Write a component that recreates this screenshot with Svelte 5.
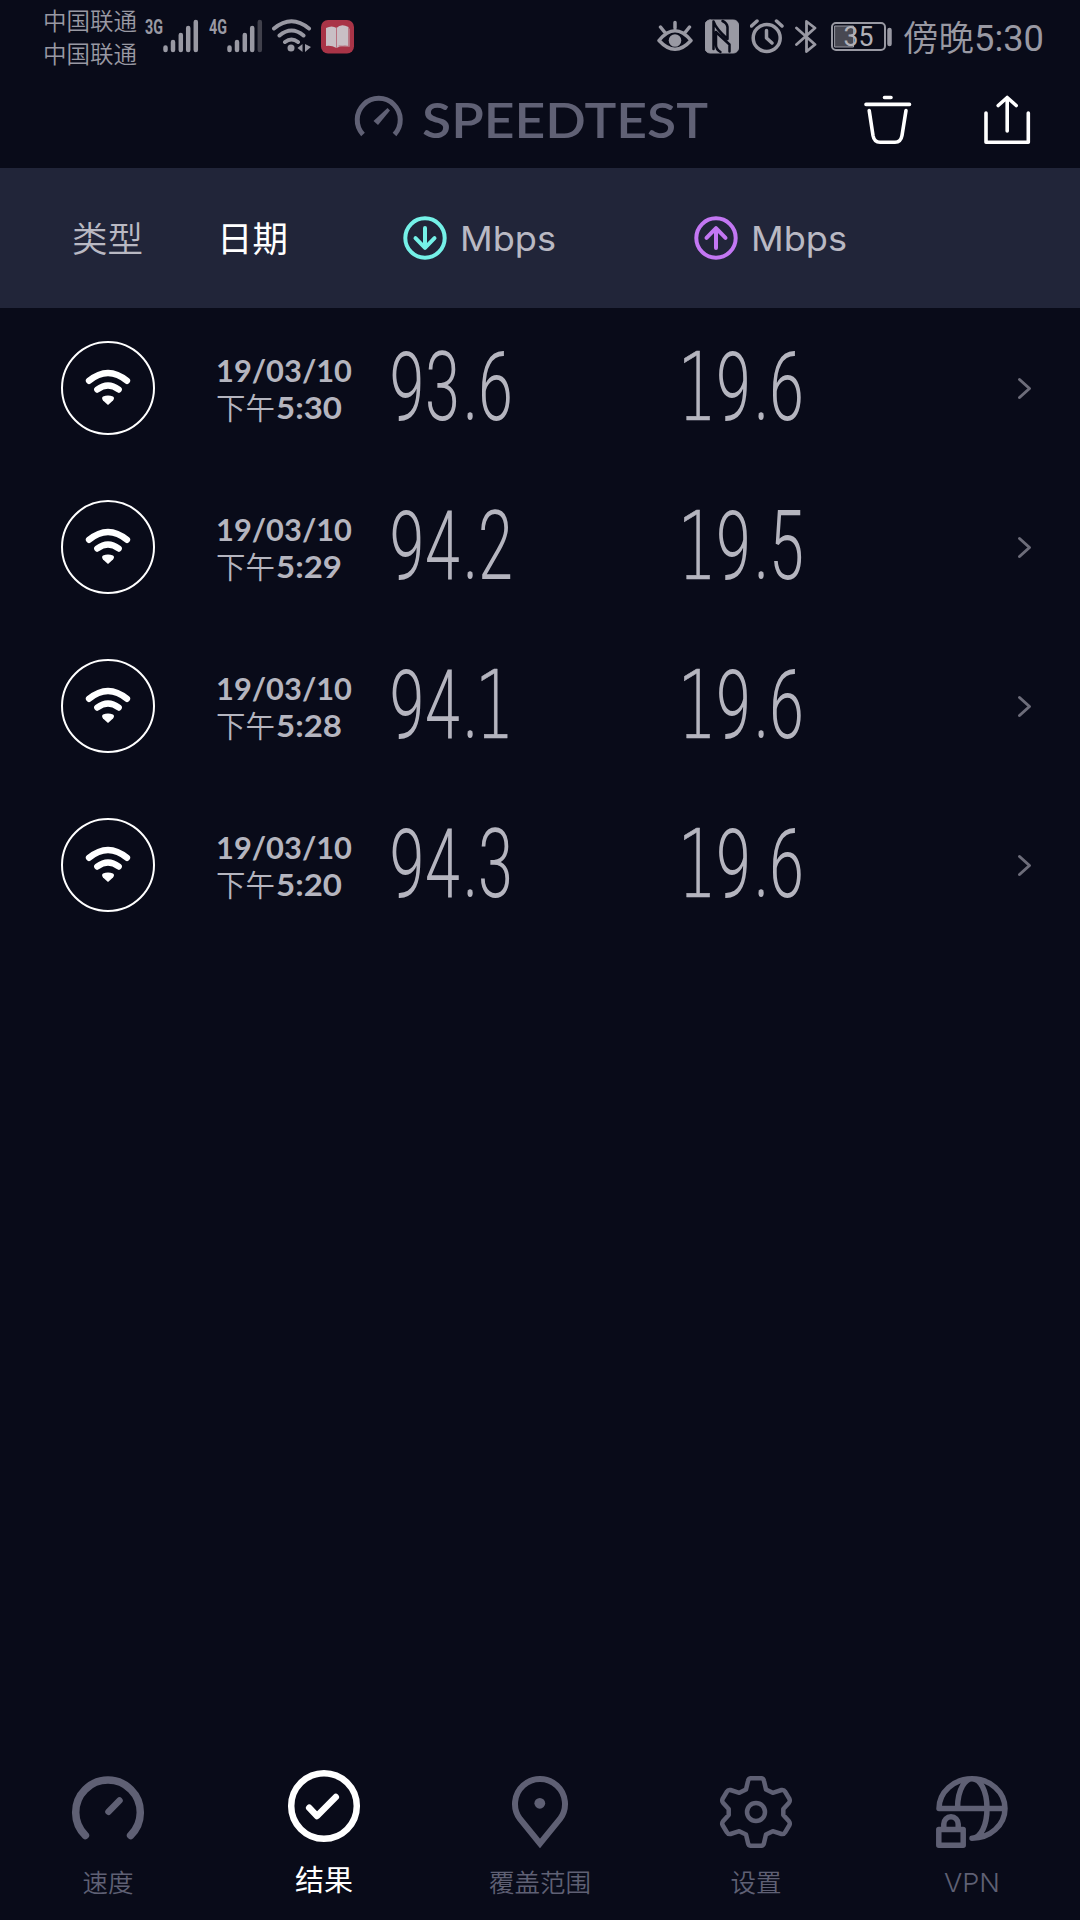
<script lang="ts">
  const results = [
    { date: '19/03/10', time: '5:30', down: '93.6', up: '19.6' },
    { date: '19/03/10', time: '5:29', down: '94.2', up: '19.5' },
    { date: '19/03/10', time: '5:28', down: '94.1', up: '19.6' },
    { date: '19/03/10', time: '5:20', down: '94.3', up: '19.6' },
  ];
  const tabs = [
    { id: 'speed', label: '速度' },
    { id: 'results', label: '结果' },
    { id: 'map', label: '覆盖范围' },
    { id: 'settings', label: '设置' },
    { id: 'vpn', label: 'VPN' },
  ];
  const active = 'results';

  // Start of each character cell in a reading such as "93.6"
  const slots = [0.5, 36, 74, 89];
  const condense = 0.655;
</script>

{#snippet bars(dim: boolean)}
  <svg class="bars" width="36" height="36" viewBox="0 0 36 36">
    <path d="M2.5 29.5V32M10 24V32M17.8 17V32M25.2 10V32" />
    <path class:dim d="M32.8 4V32" />
  </svg>
{/snippet}

<!-- Text stretched to an exact advance width -->
{#snippet fit(text: string, width: number, height: number, baseline: number, cls: string)}
  <svg class="fit {cls}" {width} {height}>
    <text x="0" y={baseline} textLength={width} lengthAdjust="spacingAndGlyphs">{text}</text>
  </svg>
{/snippet}

<!-- Condensed speed reading; the digit 1 uses a face with a foot serif -->
{#snippet reading(value: string)}
  <svg class="fit num" width="124" height="90">
    <text transform="scale({condense} 1)" y="77">{#each value.split('') as c, i}<tspan class:one={c === '1'} x={(slots[i] - (c === '1' ? 3 : 0)) / condense}>{c}</tspan>{/each}</text>
  </svg>
{/snippet}

<div class="screen">
  <div class="status">
    <div class="carriers"><span>中国联通</span><span>中国联通</span></div>
    <div class="net">{@render fit('3G', 18, 36, 16, 'gen')}{@render bars(false)}</div>
    <div class="net second">{@render fit('4G', 18, 36, 16, 'gen')}{@render bars(true)}</div>
    <svg class="wifi" width="42" height="36" viewBox="0 0 42 36">
      <path d="M3 10.500Q20.500-4 38 10.500M8.500 17.500Q20.500 7.500 32.500 17.500M14 24Q20.500 19 27 24" />
      <circle cx="20" cy="30" r="3.500" />
      <path class="solid" d="M31.500 26v8l-5-4zM34 26v8l6-5z" />
    </svg>
    <svg class="book" width="33" height="34" viewBox="0 0 33 34">
      <rect width="33" height="33.500" rx="7" fill="#a93447" />
      <path d="M5 8Q11 5 15.500 8Q20 3 27.500 7V26Q20 25 15.500 28Q10 25 5 26z" fill="#c9bfc5" />
      <path d="M15.500 8V27.500M18 26L28.500 26.500V9" stroke="#b9707f" fill="none" />
    </svg>
    <div class="sys">
      <svg class="eye" width="36" height="36" viewBox="0 0 36 36">
        <path d="M2 22.500Q18 3 34 22.500Q18 40 2 22.500zM18 10V4.500M7.500 14L3.500 9M28.500 14L32.500 9" />
        <circle cx="18" cy="22.500" r="6.300" />
      </svg>
      <svg class="nfc" width="34" height="36" viewBox="0 0 34 36">
        <rect y="2" width="33.500" height="33" rx="5" fill="#9999a3" />
        <path d="M8.500 3.500V31M8.500 3.500Q11 11 22.500 21V9Q22 5 17.500 3M11 14V27Q11 31.500 15.500 34M11 14L24.500 26.500V33.500" />
      </svg>
      <svg class="alarm" width="34" height="36" viewBox="0 0 34 36">
        <circle cx="16.700" cy="20" r="13.500" />
        <path d="M16.500 12.500V20L22 25M1.500 8L7 3M26.500 3L32 8" />
      </svg>
      <svg class="bt" width="22" height="36" viewBox="0 0 22 36">
        <path d="M1.500 10L20 26.500L11.500 33.500V3.500L20 10L1.500 26.500" />
      </svg>
      <svg class="battery" width="62" height="36" viewBox="0 0 62 36">
        <rect class="case" x="1" y="5" width="53" height="27" rx="4" />
        <rect x="4" y="8" width="18.500" height="21" fill="#484852" />
        <path d="M58.500 12V26" />
        <text x="12.500" y="27.500" textLength="30" lengthAdjust="spacingAndGlyphs">35</text>
      </svg>
      <div class="clock"><span>傍晚</span>{@render fit('5:30', 70, 40, 32.5, 'clocknum')}</div>
    </div>
  </div>

  <header>
    <div class="brand">
      <svg class="logo" width="50" height="44" viewBox="0 0 50 44">
        <path d="M9 39.500A21.500 21.500 0 1 1 40.500 39.500" />
        <path class="needle" d="M19.500 26L33.500 13L36 15.500L24 30z" />
      </svg>
      {@render fit('SPEEDTEST', 286, 50, 42.5, 'word')}
    </div>
    <svg class="act" width="52" height="54" viewBox="0 0 52 54">
      <path d="M22.500 5.500H29M4 12.400H47.500M7.200 18.500L11 43.500Q12.200 50.300 18 50.300H33Q38.800 50.300 40 43.500L44 18.500" />
    </svg>
    <svg class="act share" width="52" height="54" viewBox="0 0 52 54">
      <path d="M5 21V50.300H47.300V21M26.200 39V6M17.200 13.500L26.200 5.500L35.200 13.500" />
    </svg>
  </header>

  <div class="cols">
    <span class="type">类型</span>
    <span class="day">日期</span>
    <div class="unit down">
      <svg width="44" height="44" viewBox="0 0 44 44"><circle cx="22" cy="22" r="19.700" /><path d="M22 12V31.500M12.500 22.200L22 31.800L31.500 22.200" /></svg>
      {@render fit('Mbps', 96, 44, 34.5, 'mbps')}
    </div>
    <div class="unit up">
      <svg width="44" height="44" viewBox="0 0 44 44"><circle cx="22" cy="22" r="19.700" /><path d="M22 32V12.500M12.500 21.800L22 12.200L31.500 21.800" /></svg>
      {@render fit('Mbps', 96, 44, 34.5, 'mbps')}
    </div>
  </div>

  <main>
    {#each results as r}
      <div class="row">
        <svg class="kind" width="96" height="96" viewBox="0 0 96 96">
          <circle cx="48" cy="48" r="46" />
          <path d="M29 40.800Q48 25.200 67 40.800M37.300 49.600Q48 41.500 58.700 49.600" />
          <path class="tip" d="M43 56.500Q48 54.500 53 56.500Q55 58 53 60.500L48 65L43 60.500Q41.200 58 43 56.500z" />
        </svg>
        <div class="when">
          {@render fit(r.date, 136, 36, 30, 'date')}
          <div class="time"><span>下午</span>{@render fit(r.time, 66, 36, 30.5, 'date')}</div>
        </div>
        {@render reading(r.down)}
        {@render reading(r.up)}
        <svg class="chev" width="16" height="24" viewBox="0 0 16 24"><path d="M2.500 3.500L12.500 12.500L2.500 21.500" /></svg>
      </div>
    {/each}
  </main>

  <nav>
    {#each tabs as t}
      <div class="tab" class:active={t.id === active}>
        <svg width="80" height="84" viewBox="0 0 80 84">
          {#if t.id === 'speed'}
            <path stroke-width="7.500" d="M17.400 67.500A32.300 32.300 0 1 1 62.600 67.500" />
            <path stroke-width="6.500" d="M40.500 43.700L51.500 32.500" />
          {:else if t.id === 'results'}
            <circle cx="40" cy="38" r="32.800" stroke-width="6.500" />
            <path stroke-width="6.500" d="M25.200 39.800L33 48L51.800 29" />
          {:else if t.id === 'map'}
            <path stroke-width="6" stroke-linejoin="miter" d="M40 75.500L20 51A25 25 0 1 1 60 51z" />
            <circle class="dot" cx="39.800" cy="35.300" r="5.400" />
          {:else if t.id === 'settings'}
            <path
              stroke-width="4.500"
              d="M34.500 10.200H45.500Q47.500 10.500 48 13L50 21.500L56.700 24.800L65.500 22Q68 21.600 69 23.500L73.500 31Q74.300 33 73 34.700L67.300 41V47L73 53.300Q74.300 55 73.500 57L69 64.500Q68 66.400 65.500 66L56.700 63.200L50 66.500L48 75Q47.500 77.500 45.500 77.800H34.500Q32.500 77.500 32 75L30 66.500L23.300 63.200L14.500 66Q12 66.400 11 64.500L6.500 57Q5.700 55 7 53.300L12.700 47V41L7 34.700Q5.700 33 6.500 31L11 23.500Q12 21.600 14.500 22L23.300 24.800L30 21.500L32 13Q32.500 10.500 34.500 10.200z"
            />
            <circle cx="40" cy="44" r="9" stroke-width="4.500" />
          {:else}
            <path stroke-width="5.500" d="M7 40.500A33 29.700 0 1 1 40 70.200M7 40.500H73M25.500 40.500C25.500 20 34 10.800 40 10.800C48 10.800 55 22 55 40.500C55 57 49 70.200 40 70.200" />
            <path stroke-width="5.500" stroke-linejoin="round" d="M6.800 61.500H31.200V77.200H6.800zM11.800 61V56A7.200 7.200 0 0 1 26.200 56V61" />
          {/if}
        </svg>
        {#if t.id === 'vpn'}
          {@render fit(t.label, 56, 38, 28, 'vpn')}
        {:else}
          <span>{t.label}</span>
        {/if}
      </div>
    {/each}
  </nav>
</div>

<style>
  :global(body) { background: #090b19; }
  .screen {
    width: 1080px;
    height: 1920px;
    display: flex;
    flex-direction: column;
    background: #090b19;
    color: #b9b9c3;
    font-family: Inter, "Noto Sans CJK SC", sans-serif;
    overflow: hidden;
  }
  svg { display: block; flex: none; fill: none; stroke-linecap: round; stroke-linejoin: round; }
  .fit { overflow: visible; }
  .fit text { fill: currentColor; stroke: none; }

  .status { height: 75px; box-sizing: border-box; padding: 0 36px 0 43px; display: flex; align-items: flex-start; color: #9999a3; stroke: #9999a3; }
  .status > svg, .net, .sys { margin-top: 18px; }
  .carriers { display: flex; flex-direction: column; width: 102px; padding-top: 4px; font: 350 23.5px/33px "Noto Sans CJK SC", sans-serif; white-space: nowrap; }
  .net { display: flex; }
  .net.second { margin-left: 10px; }
  .gen { font: 700 20px Roboto, sans-serif; }
  .bars { stroke-width: 4.5; }
  .bars .dim { stroke: #41414c; }
  .wifi { margin-left: 8px; stroke-width: 4; }
  .wifi circle, .wifi .solid { fill: #9999a3; stroke: none; }
  .status > .book { margin: 20px 0 0 8px; stroke: none; }
  .sys { display: flex; margin-left: auto; }
  .eye { stroke-width: 3.5; }
  .eye circle { fill: #9999a3; stroke: none; }
  .nfc { margin-left: 12px; }
  .nfc path { stroke: #090b19; stroke-width: 2.5; }
  .alarm { margin-left: 11px; stroke-width: 3.5; }
  .bt { margin-left: 11px; stroke-width: 2.8; }
  .battery { margin-left: 14px; }
  .battery .case { stroke-width: 2; }
  .battery path { stroke-width: 4.5; }
  .battery text { fill: #b0b0b8; stroke: none; font: 400 27px Roboto, sans-serif; }
  .clock { margin-left: 10px; display: flex; font: 350 35.5px/36px "Noto Sans CJK SC", sans-serif; }
  .clock span { width: 71px; white-space: nowrap; }
  .clocknum { font: 400 36.5px Roboto, sans-serif; }

  header { height: 93px; display: flex; align-items: flex-start; }
  .brand { display: flex; margin: 20px 0 0 354px; color: #606175; width: 508px; }
  .logo { stroke: #606175; stroke-width: 5; stroke-linecap: butt; }
  .logo .needle { fill: #606175; stroke: none; }
  .word { margin-left: 18px; font: 600 47.5px Lato, sans-serif; }
  .act { stroke: #fff; stroke-width: 3.6; margin-top: 17px; }
  .share { margin-left: 67px; }

  .cols { height: 140px; background: #212539; display: flex; align-items: center; font: 350 35.5px/40px "Noto Sans CJK SC", sans-serif; }
  .type, .day { margin-top: -3px; }
  .type { width: 145px; padding-left: 72px; }
  .day { width: 186px; color: #fff; font-weight: 400; }
  .unit { display: flex; width: 291px; gap: 13px; box-sizing: border-box; }
  .unit svg:first-child { stroke-width: 4; }
  .down svg:first-child { stroke: #75f1e8; }
  .up svg:first-child { stroke: #c377f3; }
  .unit .mbps { width: 97px; font: 400 34.5px Inter, sans-serif; }

  .row { height: 159px; display: flex; align-items: center; padding-left: 60px; color: #b5b5bf; }
  .kind { stroke: #fff; }
  .kind circle { stroke-width: 2; }
  .kind path { stroke-width: 6.3; }
  .kind .tip { fill: #fff; stroke-width: 0; }
  .when { width: 233px; padding-left: 60px; box-sizing: border-box; }
  .date { font: 700 29.5px Lato, sans-serif; }
  .time { display: flex; font: 350 29.5px/36px "Noto Sans CJK SC", sans-serif; }
  .time span { width: 60px; height: 36px; white-space: nowrap; }
  .num { font: 300 96px Roboto, sans-serif; margin-right: 167px; }
  .num .one { font: 200 94.5px "DejaVu Sans", "DejaVu Sans Light", sans-serif; stroke: currentColor; stroke-width: 0.6px; }
  .chev { stroke: #6d6d7a; stroke-width: 3; margin-left: 46px; }

  nav { margin-top: auto; height: 152px; display: grid; grid-template-columns: repeat(5, 216px); color: #5f6074; }
  .tab { display: flex; flex-direction: column; align-items: center; stroke: #5f6074; }
  .tab .dot { fill: #5f6074; stroke: none; }
  .tab span { font: 350 25.5px/38px "Noto Sans CJK SC", sans-serif; margin-top: 10px; }
  .tab .vpn { margin-top: 12px; font: 300 26px Inter, sans-serif; }
  .tab.active { stroke: #fff; color: #fff; }
  .tab.active span { font-size: 29px; font-weight: 400; margin-top: 7px; }
</style>
